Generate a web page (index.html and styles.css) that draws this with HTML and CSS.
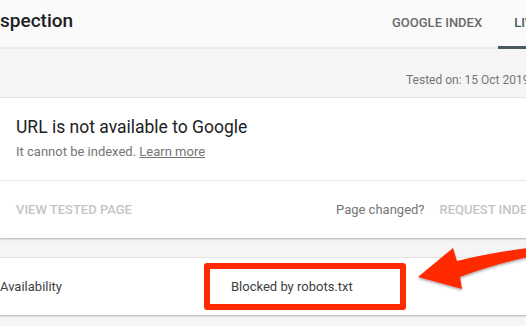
FILE: index.html
```html
<!DOCTYPE html>
<html>
<head>
<meta charset="utf-8">
<link rel="stylesheet" href="styles.css">
</head>
<body>
<div class="page">
  <header class="header">
    <div class="title">spection</div>
    <nav class="tabs">
      <div class="tab">GOOGLE INDEX</div>
      <div class="tab active">LIVE TEST</div>
    </nav>
  </header>
  <div class="tested">Tested on: 15 Oct 2019, 14:32</div>
  <section class="card">
    <div class="card-main">
      <div class="card-title">URL is not available to Google</div>
      <div class="card-sub">It cannot be indexed. <a class="link">Learn more</a></div>
    </div>
    <div class="card-actions">
      <div class="btn disabled">VIEW TESTED PAGE</div>
      <div class="right-actions">
        <span class="changed">Page changed?</span>
        <span class="btn disabled">REQUEST INDEXING</span>
      </div>
    </div>
  </section>
  <section class="card row-card">
    <div class="row-label">Availability</div>
    <div class="highlight">Blocked by robots.txt</div>
  </section>
</div>
<svg class="arrow" width="526" height="326" viewBox="0 0 526 326">
  <defs>
    <filter id="sh" x="-10%" y="-20%" width="130%" height="150%">
      <feDropShadow dx="0" dy="1.5" stdDeviation="1.2" flood-color="#000" flood-opacity="0.35"/>
    </filter>
  </defs>
  <path filter="url(#sh)" fill="#ff2a00" d="M418 277 L453 248 L457 261 Q490 253 528 248 L528 257 Q492 265 460 277 L462 289 Z"/>
</svg>
</body>
</html>
```
FILE: styles.css
```css
html, body {
  margin: 0;
  padding: 0;
  width: 526px;
  height: 326px;
  overflow: hidden;
  background: #f5f5f5;
  font-family: Roboto, "Liberation Sans", Arial, sans-serif;
}
.page {
  width: 660px;
}
.header {
  display: flex;
  height: 49px;
  background: #fafafa;
  box-shadow: inset 0 -2px 0 #ececec;
}
.title {
  width: 376px;
  flex: none;
  font-size: 19px;
  font-weight: 500;
  color: #202124;
  line-height: 42px;
}
.tabs {
  display: flex;
}
.tab {
  display: flex;
  align-items: center;
  padding: 0 16px 4px;
  font-size: 13px;
  font-weight: 500;
  letter-spacing: 0;
  color: #6a6a6a;
}
.tab.active {
  color: #455a64;
  box-shadow: inset 0 -3px 0 #4a5a63;
}
.tested {
  height: 49px;
  box-sizing: border-box;
  padding: 24px 0 0 406px;
  font-size: 12px;
  line-height: 14px;
  color: #757575;
  background: #f5f5f5;
  white-space: nowrap;
}
.card {
  background: #fff;
  box-shadow: 0 1px 2px rgba(0,0,0,0.3), 0 -1px 1px rgba(0,0,0,0.04);
}
.card-main {
  padding: 17px 16px 18px;
  border-bottom: 1px solid #e8e8e8;
}
.card-title {
  font-size: 17.5px;
  line-height: 24px;
  color: #202124;
}
.card-sub {
  margin-top: 3px;
  font-size: 13px;
  line-height: 20px;
  color: #757575;
}
.link {
  color: #757575;
  text-decoration: underline;
}
.card-actions {
  display: flex;
  align-items: center;
  justify-content: space-between;
  height: 57px;
  padding: 0 0 0 16px;
}
.btn {
  font-size: 13px;
  font-weight: 500;
  letter-spacing: 0;
}
.disabled {
  color: #c4c4c4;
}
.right-actions {
  display: flex;
  align-items: center;
  gap: 15px;
  width: 324px;
  white-space: nowrap;
}
.changed {
  font-size: 13px;
  color: #757575;
}
.row-card {
  margin-top: 20px;
  display: flex;
  align-items: center;
  padding: 5px 0;
}
.row-label {
  width: 204px;
  font-size: 13px;
  color: #3c4043;
}
.highlight {
  width: 202px;
  height: 47px;
  box-sizing: border-box;
  border: 6px solid #ff2a00;
  border-radius: 3px;
  padding-left: 21px;
  display: flex;
  align-items: center;
  font-size: 13px;
  color: #3c4043;
}
.arrow {
  position: absolute;
  left: 0;
  top: 0;
  pointer-events: none;
}
```
